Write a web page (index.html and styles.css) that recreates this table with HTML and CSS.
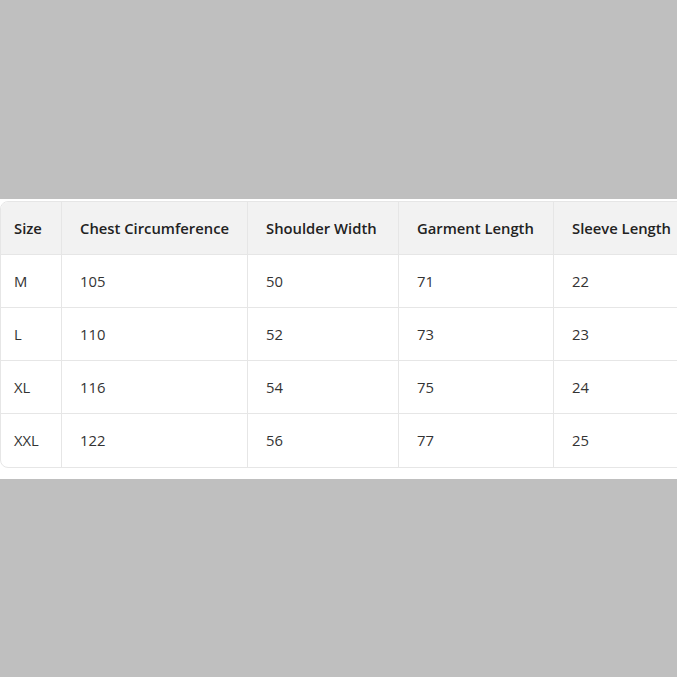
FILE: index.html
```html
<!DOCTYPE html>
<html>
<head>
<meta charset="utf-8">
<link rel="stylesheet" href="styles.css">
</head>
<body>
<div class="band">
  <div class="wrap">
    <table class="size-table">
      <colgroup>
        <col class="c1"><col class="c2"><col class="c3"><col class="c4"><col class="c5">
      </colgroup>
      <thead>
        <tr><th>Size</th><th>Chest Circumference</th><th>Shoulder Width</th><th>Garment Length</th><th>Sleeve Length</th></tr>
      </thead>
      <tbody>
        <tr><td>M</td><td>105</td><td>50</td><td>71</td><td>22</td></tr>
        <tr><td>L</td><td>110</td><td>52</td><td>73</td><td>23</td></tr>
        <tr><td>XL</td><td>116</td><td>54</td><td>75</td><td>24</td></tr>
        <tr><td>XXL</td><td>122</td><td>56</td><td>77</td><td>25</td></tr>
      </tbody>
    </table>
  </div>
</div>
</body>
</html>
```

FILE: styles.css
```css
html, body {
  margin: 0;
  padding: 0;
}
body {
  width: 677px;
  height: 677px;
  background: #bfbfbf;
  display: flex;
  align-items: center;
  overflow: hidden;
  font-family: "Open Sans", "Noto Sans", sans-serif;
}
.band {
  width: 100%;
  height: 280px;
  box-sizing: border-box;
  background: #fff;
  padding-top: 2px;
  overflow: hidden;
}
.wrap {
  width: 720px;
}
.size-table {
  table-layout: fixed;
  width: 720px;
  border-collapse: separate;
  border-spacing: 0;
  border: 1px solid #e6e6e6;
  border-radius: 8px;
  overflow: hidden;
}
.c1 { width: 60px; }
.c2 { width: 186px; }
.c3 { width: 151px; }
.c4 { width: 155px; }
.c5 { width: auto; }
.size-table th,
.size-table td {
  height: 53px;
  box-sizing: border-box;
  padding: 0 0 0 18px;
  text-align: left;
  border-bottom: 1px solid #e6e6e6;
  border-left: 1px solid #e6e6e6;
  white-space: nowrap;
  font-size: 14.8px;
}
.size-table th:first-child,
.size-table td:first-child {
  border-left: none;
  padding-left: 13px;
}
.size-table tbody tr:last-child td {
  border-bottom: none;
}
.size-table th {
  background: #f2f2f2;
  color: #222;
  font-weight: 600;
}
.size-table td {
  color: #333;
  font-weight: 400;
}
```
